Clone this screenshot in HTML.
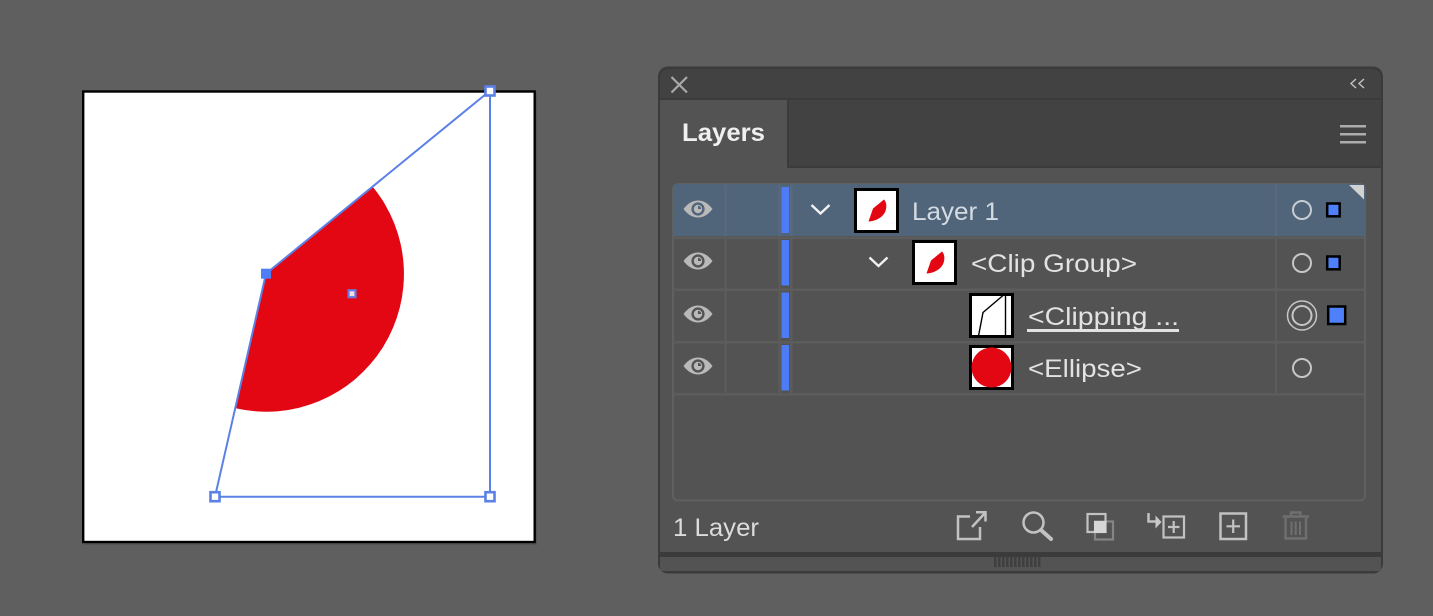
<!DOCTYPE html>
<html lang="en">
<head>
<meta charset="utf-8">
<title>Layers</title>
<style>
html,body{margin:0;padding:0;background:#5f5f5f;width:1433px;height:616px;overflow:hidden}
svg{display:block}
text{font-family:"Liberation Sans",sans-serif}
</style>
</head>
<body>
<svg width="1433" height="616" viewBox="0 0 1433 616" xmlns="http://www.w3.org/2000/svg">
<defs>
<symbol id="eye" viewBox="0 0 30 18" overflow="visible">
<path d="M0.5 9C5 3 10 0.5 15 0.5S25 3 29.5 9C25 15 20 17.500 15 17.500S5 15 0.5 9Z" fill="#b9b9b9"/>
<circle cx="15" cy="9" r="6.600" fill="var(--e)"/>
<circle cx="15" cy="9" r="4.200" fill="#b9b9b9"/>
<path d="M15 9V5.800A3.200 3.200 0 0 1 18.200 9Z" fill="var(--e)"/>
</symbol>
<symbol id="leaf" viewBox="0 0 45 45">
<rect x="1.500" y="1.500" width="42" height="42" fill="#fff" stroke="#000" stroke-width="3"/>
<path d="M19 20.500L30 11.500C32.500 14 33 18.500 31.500 23C29.500 28.500 23 33 14.500 33.500Z" fill="#e30613"/>
</symbol>
</defs>

<!-- artboard -->
<rect x="84" y="93" width="453" height="452" fill="#4f4f4f" opacity=".65"/>
<rect x="83.200" y="91.500" width="451.500" height="450.500" fill="#fff" stroke="#000" stroke-width="2.400"/>
<path d="M266 273.700L372.700 186.700A137.700 137.700 0 0 1 235.700 408.300Z" fill="#e30613"/>
<g fill="none" stroke="#5b80e6" stroke-width="2">
<path d="M215 496.700L266 273.700L490 90.700V496.700Z"/>
</g>
<g fill="#fff" stroke="#5b80e6" stroke-width="2.600">
<rect x="485.500" y="86.500" width="9" height="9"/>
<rect x="210.500" y="492.200" width="9" height="9"/>
<rect x="485.500" y="492.200" width="9" height="9"/>
</g>
<rect x="261" y="268.700" width="10" height="10" fill="#4f7cf7"/>
<rect x="348.500" y="290.200" width="7" height="7" fill="#f3dce4" stroke="#6a78dd" stroke-width="2.200"/>

<!-- panel -->
<rect x="658" y="66.500" width="725" height="507" rx="10" fill="#3b3b3b"/>
<path d="M660 79Q660 69 670 69H1371Q1381 69 1381 79V98H660Z" fill="#424242"/>
<rect x="660" y="100" width="721" height="67" fill="#424242"/>
<rect x="660" y="98" width="721" height="2" fill="#3b3b3b"/>
<rect x="660" y="167" width="721" height="385" fill="#535353"/>
<rect x="660" y="100" width="127" height="69" fill="#535353"/>
<rect x="787" y="100" width="2" height="68" fill="#3b3b3b"/>
<rect x="789" y="166" width="592" height="2" fill="#3b3b3b"/>
<rect x="660" y="557" width="721" height="14" fill="#535353"/>
<rect x="660" y="552" width="721" height="5" fill="#3b3b3b"/>

<!-- titlebar icons -->
<path d="M671.500 77L687 92.500M687 77L671.500 92.500" stroke="#a9a9a9" stroke-width="2.200" fill="none"/>
<path d="M1356 79L1351 83.500L1356 88M1364 79L1359 83.500L1364 88" stroke="#c4c4c4" stroke-width="1.400" fill="none"/>
<g fill="#acacac"><rect x="1340" y="125" width="26" height="2.500"/><rect x="1340" y="133" width="26" height="2.500"/><rect x="1340" y="141" width="26" height="2.500"/></g>
<text x="682" y="141" font-size="25" font-weight="700" fill="#f0f0f0" textLength="83" lengthAdjust="spacingAndGlyphs">Layers</text>

<!-- list -->
<rect x="673" y="184" width="692" height="316.500" rx="5" fill="#535353" stroke="#606060" stroke-width="2"/>
<path d="M673 189Q673 184 678 184H1360Q1365 184 1365 189V236H673Z" fill="#50647a"/>
<g fill="#5c5c5c">
<rect x="673" y="236.500" width="692" height="2.500"/>
<rect x="673" y="288.500" width="692" height="2.500"/>
<rect x="673" y="341" width="692" height="2.500"/>
<rect x="673" y="393" width="692" height="2.500"/>
<rect x="724.500" y="239" width="2" height="154"/>
<rect x="778.500" y="239" width="2" height="154"/>
<rect x="790" y="239" width="2.500" height="154"/>
<rect x="1275" y="239" width="2" height="154"/>
</g>
<g fill="#5a6a7d">
<rect x="724.500" y="185" width="2" height="51"/>
<rect x="778.500" y="185" width="2" height="51"/>
<rect x="790" y="185" width="2.500" height="51"/>
<rect x="1275" y="185" width="2" height="51"/>
</g>
<path d="M1349 185H1364V199.500Z" fill="#d2d2d2"/>

<!-- eyes -->
<use href="#eye" x="683" y="200" width="30" height="18" style="--e:#50647a"/>
<use href="#eye" x="683" y="252" width="30" height="18" style="--e:#535353"/>
<use href="#eye" x="683" y="305" width="30" height="18" style="--e:#535353"/>
<use href="#eye" x="683" y="357" width="30" height="18" style="--e:#535353"/>

<!-- color bars -->
<g fill="#4e7cf6">
<rect x="781.500" y="187" width="7.500" height="46"/>
<rect x="781.500" y="240" width="7.500" height="45.500"/>
<rect x="781.500" y="292.500" width="7.500" height="45.500"/>
<rect x="781.500" y="345" width="7.500" height="45.500"/>
</g>

<!-- chevrons -->
<path d="M811.500 205L820.500 213.500L829.500 205" stroke="#f2f2f2" stroke-width="2.400" fill="none"/>
<path d="M869.500 257.500L878.500 266L887.500 257.500" stroke="#f2f2f2" stroke-width="2.400" fill="none"/>

<!-- thumbnails -->
<use href="#leaf" x="854" y="188" width="45" height="45"/>
<use href="#leaf" x="912" y="240" width="45" height="45"/>
<rect x="970.500" y="294.500" width="42" height="42" fill="#fff" stroke="#000" stroke-width="3"/>
<path d="M978.500 336L983 312.500L1003 295.500M1005.500 295V336" fill="none" stroke="#000" stroke-width="1.400"/>
<rect x="970.500" y="346.500" width="42" height="42" fill="#fff" stroke="#000" stroke-width="3"/>
<circle cx="991.500" cy="367.500" r="20" fill="#e30613"/>

<!-- labels -->
<text x="912" y="220" font-size="25" fill="#d4dbe3" textLength="87" lengthAdjust="spacingAndGlyphs">Layer 1</text>
<text x="971" y="272" font-size="25" fill="#e2e2e2" textLength="166" lengthAdjust="spacingAndGlyphs">&lt;Clip Group&gt;</text>
<text x="1028" y="325" font-size="25" fill="#e2e2e2" textLength="151" lengthAdjust="spacingAndGlyphs">&lt;Clipping ...</text>
<rect x="1027" y="329" width="152" height="3" fill="#e2e2e2"/>
<text x="1028" y="377" font-size="25" fill="#e2e2e2" textLength="114" lengthAdjust="spacingAndGlyphs">&lt;Ellipse&gt;</text>

<!-- target circles -->
<g fill="none" stroke="#c6c6c6">
<circle cx="1302" cy="210" r="9" stroke-width="2" stroke="#c6ccd2"/>
<circle cx="1302" cy="263" r="9" stroke-width="2"/>
<circle cx="1302" cy="315.500" r="9.500" stroke-width="2"/>
<circle cx="1302" cy="315.500" r="14.500" stroke-width="1.500"/>
<circle cx="1302" cy="368" r="9" stroke-width="2"/>
</g>

<!-- selection squares -->
<g fill="#4f80fb" stroke="#000" stroke-width="2.500">
<rect x="1327.200" y="203.500" width="12.500" height="12.800"/>
<rect x="1327.200" y="256.500" width="12.500" height="12.800"/>
<rect x="1328.200" y="306.500" width="17" height="17.500"/>
</g>

<!-- footer -->
<text x="673" y="536" font-size="25" fill="#dcdcdc" textLength="86" lengthAdjust="spacingAndGlyphs">1 Layer</text>
<g fill="none" stroke="#c2c2c2" stroke-width="2.500">
<path d="M970 516.500H958V539H980V527"/>
<path d="M972 527L985 513"/>
<path d="M976 512.300H985.500V521.500"/>
<circle cx="1033.500" cy="522.500" r="10"/>
<path d="M1041 530L1051 539" stroke-width="4" stroke-linecap="round"/>
<rect x="1095" y="521.500" width="18" height="18" stroke="#858585" stroke-width="2.200"/>
<rect x="1087.500" y="514" width="18" height="18" stroke-width="2.200"/>
<path d="M1148.500 513V521.500H1156"/>
<rect x="1163.500" y="516.500" width="20.500" height="21" stroke-width="2.200"/>
<path d="M1168 527H1179.500M1173.700 521V533" stroke-width="2.200"/>
<rect x="1220.500" y="513.500" width="25.500" height="25.500"/>
<path d="M1226.500 526.300H1240M1233.200 519.500V533" stroke-width="2.200"/>
</g>
<rect x="1094" y="521" width="12.500" height="12" fill="#d6d6d6"/>
<path d="M1155.500 515.500L1161.500 522L1155.500 528.500Z" fill="#c8c8c8"/>
<g fill="none" stroke="#6f6f6f" stroke-width="2.400">
<path d="M1282.500 516.500H1309"/>
<path d="M1291 516V512.500H1300.500V516"/>
<path d="M1285.500 518V538.500H1306V518"/>
<path d="M1291.500 521.500V535M1295.700 521.500V535M1300 521.500V535" stroke-width="2"/>
</g>

<!-- grip -->
<g fill="#3f3f3f">
<rect x="994" y="557" width="2.500" height="10"/><rect x="998" y="557" width="2.500" height="10"/><rect x="1002" y="557" width="2.500" height="10"/><rect x="1006" y="557" width="2.500" height="10"/><rect x="1010" y="557" width="2.500" height="10"/><rect x="1014" y="557" width="2.500" height="10"/><rect x="1018" y="557" width="2.500" height="10"/><rect x="1022" y="557" width="2.500" height="10"/><rect x="1026" y="557" width="2.500" height="10"/><rect x="1030" y="557" width="2.500" height="10"/><rect x="1034" y="557" width="2.500" height="10"/><rect x="1038" y="557" width="2.500" height="10"/>
</g>
</svg>
</body>
</html>
